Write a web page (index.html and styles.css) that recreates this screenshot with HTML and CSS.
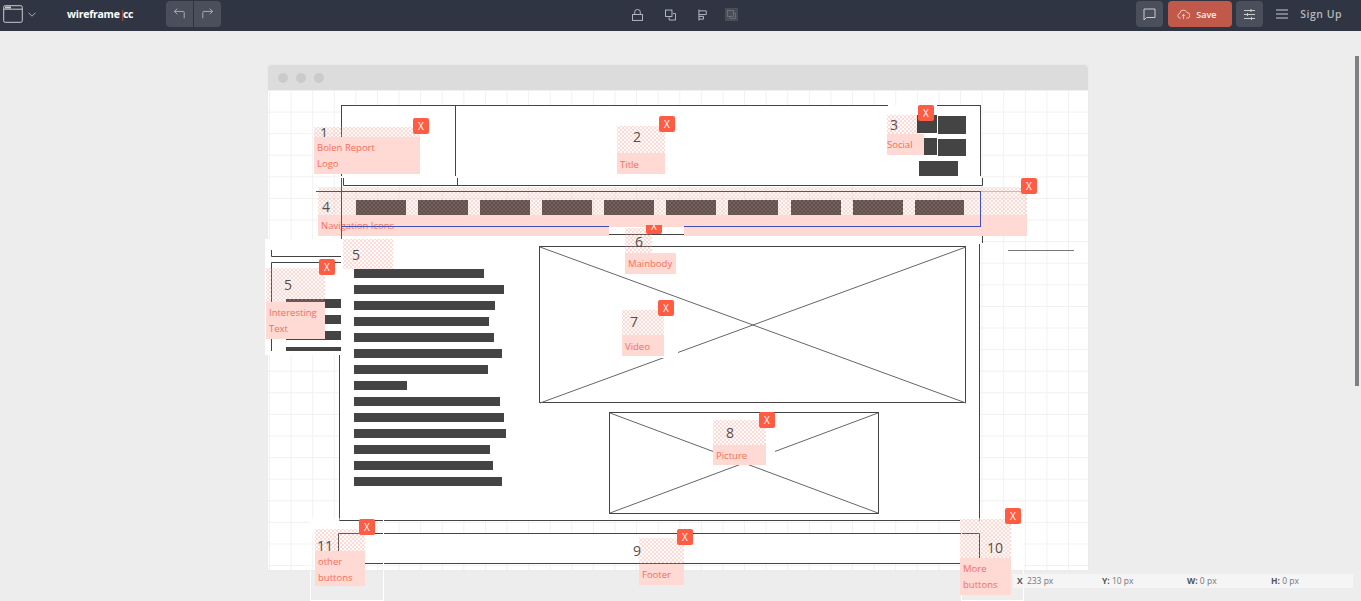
FILE: index.html
```html
<!DOCTYPE html>
<html lang="en">
<head>
<meta charset="utf-8">
<title>wireframe.cc</title>
<link rel="stylesheet" href="styles.css">
</head>
<body>
<header class="topbar">
  <div class="side left">
    <svg class="ic browser-ic" viewBox="0 0 20 18"><rect x="0.7" y="0.7" width="18.6" height="16.6" rx="1.5"/><path d="M1 4.2H19"/><path class="solid" d="M2 1.5h6v2H2z"/></svg>
    <svg class="ic chev" viewBox="0 0 8 5"><path d="M.5.7 4 4.200 7.500.7"/></svg>
    <div class="logo">wireframe<span class="pipe">|</span>cc</div>
    <div class="group">
      <button class="tbtn"><svg class="ic i14" viewBox="0 0 14 14"><path d="M1 4h10.500a1 1 0 0 1 1 1v7M4.500.8 1 4l3.500 3.200"/></svg></button>
      <button class="tbtn"><svg class="ic i14" viewBox="0 0 14 14"><path d="M13 4H2.500a1 1 0 0 0-1 1v7M9.500.8 13 4 9.500 7.200"/></svg></button>
    </div>
  </div>
  <div class="center">
    <svg class="ic i12" viewBox="0 0 12 13"><rect x=".6" y="6" width="10.800" height="6.400"/><path d="M3 6V3a3 2.500 0 0 1 6 0v3"/></svg>
    <svg class="ic i12" viewBox="0 0 12 12"><rect x=".6" y=".6" width="7" height="7"/><path d="M8.500 4.500h3v7h-7v-3"/></svg>
    <svg class="ic i12" viewBox="0 0 12 12"><path d="M1 0v12M1 1.500h8v4H1M1 7.500h5v3H1"/></svg>
    <span class="disabled"><svg class="ic i9" viewBox="0 0 10 10"><rect x=".6" y=".6" width="6.500" height="6.500"/><path d="M7 3.500h2.400v6h-6V7"/></svg></span>
  </div>
  <div class="side right">
    <button class="sq"><svg class="ic i13" viewBox="0 0 13 13"><path d="M1 1h11v8.500H3.500L1 12z"/></svg></button>
    <button class="save"><svg class="ic cloud" viewBox="0 0 14 12"><path d="M4 10H3.200A2.700 2.700 0 0 1 3 4.700 4 4 0 0 1 10.800 4 3 3 0 0 1 11 10h-1M7 11V6M5 7.800 7 5.800l2 2"/></svg>Save</button>
    <button class="sq"><svg class="ic i13" viewBox="0 0 13 13"><path d="M1 2.500h11M1 6.500h11M1 10.500h11M8 1v3M4.500 5v3M8.500 9v3"/></svg></button>
    <svg class="ic burger" viewBox="0 0 12 10"><path d="M0 1h12M0 5h12M0 9h12"/></svg>
    <span class="signup">Sign Up</span>
  </div>
</header>

<main class="browser">
  <div class="titlebar"><i></i><i></i><i></i></div>
  <div class="canvas">
    <svg class="layer" viewBox="268 90 820 480" width="820" height="480">
      <g class="paper">
        <rect x="342" y="105" width="638" height="80"/>
        <rect x="265" y="239" width="77" height="116"/>
        <rect x="340" y="236" width="640" height="284"/>
        <rect x="339" y="533" width="640" height="31"/>
        <rect x="310" y="519" width="49" height="14"/>
        <rect x="960" y="519" width="64" height="51"/>
        <rect x="609" y="226" width="75" height="49"/>
      </g>
      <g class="frame">
        <path d="M341 105.500H888M937 105.500H981M341.500 105V176M980.500 105V176M455.500 105V176M343.500 178V185.500H982.500V178M457.500 178V185"/>
        <path d="M271.500 250V256.500H341M271.500 351V262.500H341M982.500 236V243M979.500 244V520.500M339.500 355V520.500H960"/>
        <path d="M338.500 551V533.500H979.500V563.500H365"/>
      </g>
      <g class="thin">
        <rect x="539.500" y="246.500" width="426" height="156"/>
        <path d="M540 247 966 403M540 403 966 247"/>
        <rect x="609.500" y="412.500" width="269" height="101"/>
        <path d="M610 413 878 513M610 513 878 413"/>
        <path class="far" d="M1008 250.500H1074"/>
      </g>
      <g class="paper">
        <rect x="662" y="349" width="16" height="9"/>
        <rect x="766" y="445" width="9" height="10"/>
      </g>
      <g class="ink">
        <rect x="917" y="115" width="20" height="18"/><rect x="938" y="116" width="28" height="18"/>
        <rect x="924" y="138" width="13" height="17"/><rect x="938" y="139" width="28" height="17"/>
        <rect x="919" y="161" width="39" height="15"/>
        <rect x="356" y="200" width="50" height="15"/><rect x="418" y="200" width="50" height="15"/>
        <rect x="480" y="200" width="50" height="15"/><rect x="542" y="200" width="50" height="15"/>
        <rect x="604" y="200" width="50" height="15"/><rect x="666" y="200" width="50" height="15"/>
        <rect x="728" y="200" width="50" height="15"/><rect x="791" y="200" width="50" height="15"/>
        <rect x="853" y="200" width="50" height="15"/><rect x="915" y="200" width="49" height="15"/>
        <rect x="286" y="299" width="55" height="9"/><rect x="286" y="315" width="55" height="9"/>
        <rect x="286" y="331" width="55" height="9"/><rect x="286" y="347" width="55" height="4"/>
        <rect x="354" y="269" width="130" height="9"/><rect x="354" y="285" width="150" height="9"/>
        <rect x="354" y="301" width="141" height="9"/><rect x="354" y="317" width="135" height="9"/>
        <rect x="354" y="333" width="140" height="9"/><rect x="354" y="349" width="148" height="9"/>
        <rect x="354" y="365" width="134" height="9"/><rect x="354" y="381" width="53" height="9"/>
        <rect x="354" y="397" width="146" height="9"/><rect x="354" y="413" width="150" height="9"/>
        <rect x="354" y="429" width="152" height="9"/><rect x="354" y="445" width="136" height="9"/>
        <rect x="354" y="461" width="139" height="9"/><rect x="354" y="477" width="148" height="9"/>
      </g>
      <g class="ghost">
        <rect x="310.500" y="519" width="73" height="81.500"/>
        <rect x="961.500" y="519" width="62" height="81.500"/>
      </g>
    </svg>

    <div class="badge b4"><div class="dots"><span class="num">4</span></div><div class="lbl">Navigation Icons</div><span class="x">X</span></div>

    <svg class="layer" viewBox="268 90 820 480" width="820" height="480">
      <path class="blue" d="M316 191.500H981M341.500 178V239M980.500 191V227M341 226.500H609M684 226.500H981"/>
      <path class="blue pale" d="M981 191.500H1021"/>
      <rect class="paper" x="609" y="227" width="75" height="20"/>
      <path class="frame" d="M609 234.500H684M609 246.500H684"/>
    </svg>

    <div class="badge b1"><div class="dots"><span class="num">1</span></div><div class="lbl">Bolen Report<br>Logo</div><span class="x">X</span></div>
    <div class="badge b2"><div class="dots"><span class="num">2</span></div><div class="lbl">Title</div><span class="x">X</span></div>
    <div class="badge b3"><div class="dots"><span class="num">3</span></div><div class="lbl">Social</div><span class="x">X</span></div>
    <div class="badge b5"><div class="dots"><span class="num">5</span></div></div>
    <div class="badge b5l"><div class="dots"><span class="num">5</span></div><div class="lbl">Interesting<br>Text</div><span class="x">X</span></div>
    <div class="badge b6"><div class="dots"><span class="num">6</span></div><div class="lbl">Mainbody</div><span class="x">X</span></div>
    <div class="badge b7"><div class="dots"><span class="num">7</span></div><div class="lbl">Video</div><span class="x">X</span></div>
    <div class="badge b8"><div class="dots"><span class="num">8</span></div><div class="lbl">Picture</div><span class="x">X</span></div>
    <div class="badge b9"><div class="dots"><span class="num">9</span></div><div class="lbl">Footer</div><span class="x">X</span></div>
    <div class="badge b10"><div class="dots"><span class="num">10</span></div><div class="lbl">More<br>buttons</div><span class="x">X</span></div>
    <div class="badge b11"><div class="dots"><span class="num">11</span></div><div class="lbl">other<br>buttons</div><span class="x">X</span></div>
  </div>
</main>

<div class="coords">
  <span class="c1"><b>X</b> 233 px</span>
  <span class="c2"><b>Y:</b> 10 px</span>
  <span class="c3"><b>W:</b> 0 px</span>
  <span class="c4"><b>H:</b> 0 px</span>
</div>
<div class="scroll"></div>
</body>
</html>
```
FILE: styles.css
```css
* { box-sizing: border-box; }
html, body { margin: 0; height: 100%; }
body { background: #ededed; overflow: hidden; font-family: "Open Sans", sans-serif; position: relative; }
button { border: 0; padding: 0; font: inherit; color: inherit; }

.topbar { height: 31px; background: #2f3542; display: flex; align-items: flex-start; justify-content: space-between; position: relative; }
.side { display: flex; align-items: center; height: 28px; }
.side.left { padding-left: 3px; }
.side.right { padding-right: 19px; }
.ic { display: block; fill: none; stroke: #c9cbd0; stroke-width: 1; }
.solid { fill: #c9cbd0; stroke: none; }
.browser-ic { width: 20px; height: 18px; }
.chev { width: 8px; height: 5px; margin-left: 5px; stroke: #a9acb3; }
.logo { margin-left: 31px; width: 99px; color: #fff; font-size: 10.5px; font-weight: 700; letter-spacing: -.25px; }
.pipe { color: #e0533f; font-weight: 400; margin-right: -1px; letter-spacing: -1.5px; }
.group { display: flex; height: 26px; border-radius: 4px; overflow: hidden; gap: 1px; background: #2f3542; }
.tbtn { width: 27px; background: #4a4f5b; display: flex; align-items: center; justify-content: center; }
.i14 { width: 13px; height: 12px; stroke: #b6b9bf; }
.center { position: absolute; left: 632px; top: 8px; display: flex; align-items: center; height: 13px; gap: 22px; }
.i12 { width: 11px; height: 12px; stroke: #bfc2c7; }
.disabled { width: 13px; height: 13px; margin-left: -6px; background: #494d57; display: flex; align-items: center; justify-content: center; }
.i9 { width: 9px; height: 9px; stroke: #6f727a; }
.sq { width: 27px; height: 26px; background: #4a4f5b; border-radius: 4px; display: flex; align-items: center; justify-content: center; }
.i13 { width: 13px; height: 13px; stroke: #c9cbd0; }
.save { width: 64px; height: 26px; margin: 0 4px 0 5px; background: #c0594a; border-radius: 4px; color: #fdeeea; font-size: 9px; font-weight: 600; display: flex; align-items: center; justify-content: flex-start; padding-left: 9px; gap: 6px; }
.cloud { width: 13px; height: 11px; stroke: #f4cfc9; }
.burger { width: 12px; height: 10px; margin-left: 13px; }
.signup { margin-left: 12px; color: #b5b8bd; font-size: 10.5px; font-weight: 600; letter-spacing: .5px; }

.browser { position: absolute; left: 268px; top: 65px; width: 820px; height: 505px; box-shadow: 0 0 1px #ddd; }
.titlebar { height: 25px; background: #dcdcdc; border-radius: 4px 4px 0 0; display: flex; align-items: center; gap: 8px; padding-left: 10px; }
.titlebar i { width: 10px; height: 10px; border-radius: 50%; background: #cbcbcb; }
.canvas { position: relative; height: 480px; background-color: #fff;
  background-image: linear-gradient(#f1f1f1 1px, transparent 1px), linear-gradient(90deg, #f1f1f1 1px, transparent 1px);
  background-size: 21.6px 21.6px; background-position: 1px 0; }
.layer { position: absolute; left: 0; top: 0; overflow: visible; }
.paper, .paper rect { fill: #fff; stroke: none; }
.frame { fill: none; stroke: #444; stroke-width: 1; }
.thin { fill: none; stroke: #666; stroke-width: 1; }
.thin rect { stroke: #444; }
.far { stroke: #777; }
.ink rect { fill: #444; }
.ghost rect { fill: none; stroke: #fff; stroke-width: 1; }
.blue { fill: none; stroke: #3f51b5; stroke-width: 1; }
.pale { stroke: #b5bde6; }

.badge { position: absolute; display: flex; flex-direction: column; }
.dots { flex: none; background-color: rgba(255, 217, 211, .1);
  background-image: radial-gradient(circle, rgba(245, 120, 100, .3) .65px, transparent 1px), radial-gradient(circle, rgba(245, 120, 100, .3) .65px, transparent 1px);
  background-size: 4px 4px; background-position: 0 0, 2px 2px; }
.num { display: block; color: #4f4f4f; font-size: 14px; line-height: 14px; white-space: nowrap; }
.lbl { flex: none; background: #ffd9d3; color: #f5705c; font-size: 9.5px; line-height: 16px; padding: 3px 0 0 3px; white-space: nowrap; }
.x { position: absolute; width: 16px; height: 16px; background: #ff5c43; border-radius: 2px; color: #fff; font-size: 10px; line-height: 16px; text-align: center; }

.b1 { left: 46px; top: 37px; width: 106px; }
.b1 .dots { height: 10px; } .b1 .num { margin: -1px 0 0 6px; } .b1 .lbl { height: 37px; } .b1 .x { left: 99px; top: -9px; }
.b2 { left: 349px; top: 36px; width: 48px; }
.b2 .dots { height: 27px; padding-top: 4px; } .b2 .num { margin-left: 16px; } .b2 .lbl { height: 21px; padding-top: 4px; } .b2 .x { left: 42px; top: -10px; }
.b3 { left: 619px; top: 25px; width: 37px; }
.b3 .dots { height: 19px; width: 30px; padding-top: 3px; } .b3 .num { margin-left: 3px; } .b3 .lbl { height: 21px; padding-left: 0; } .b3 .x { left: 31px; top: -10px; }
.b4 { left: 50px; top: 97px; width: 709px; }
.b4 .dots { height: 28px; padding-top: 13px; } .b4 .num { margin-left: 4px; } .b4 .lbl { height: 21px; } .b4 .x { left: 703px; top: -9px; }
.b5 { left: 75px; top: 149px; width: 50px; }
.b5 .dots { height: 30px; padding-top: 9px; } .b5 .num { margin-left: 9px; }
.b5l { left: -2px; top: 178px; width: 59px; }
.b5l .dots { height: 34px; padding-top: 10px; } .b5l .num { margin-left: 18px; } .b5l .lbl { height: 37px; } .b5l .x { left: 53px; top: -9px; }
.b6 { left: 357px; top: 138px; width: 51px; }
.b6 .dots { height: 25px; width: 27px; padding-top: 7px; } .b6 .num { margin-left: 10px; } .b6 .lbl { height: 21px; } .b6 .x { left: 21px; top: -3px; height: 9px; line-height: 3px; border-radius: 0 0 2px 2px; overflow: hidden; }
.b7 { left: 354px; top: 220px; width: 42px; }
.b7 .dots { height: 25px; padding-top: 5px; } .b7 .num { margin-left: 8px; } .b7 .lbl { height: 21px; padding-top: 4px; } .b7 .x { left: 36px; top: -10px; }
.b8 { left: 445px; top: 330px; width: 53px; }
.b8 .dots { height: 25px; padding-top: 6px; } .b8 .num { margin-left: 13px; } .b8 .lbl { height: 20px; } .b8 .x { left: 46px; top: -8px; }
.b9 { left: 371px; top: 448px; width: 45px; }
.b9 .dots { height: 26px; padding-top: 6px; } .b9 .num { margin-left: -6px; } .b9 .lbl { height: 21px; } .b9 .x { left: 38px; top: -9px; }
.b10 { left: 692px; top: 429px; width: 51px; }
.b10 .dots { height: 39px; padding-top: 22px; } .b10 .num { margin-left: 27px; } .b10 .lbl { height: 37px; } .b10 .x { left: 45px; top: -11px; }
.b11 { left: 47px; top: 439px; width: 50px; }
.b11 .dots { height: 22px; padding-top: 10px; } .b11 .num { margin-left: 2px; } .b11 .lbl { height: 35px; } .b11 .x { left: 44px; top: -10px; }

.coords { position: absolute; left: 1013px; top: 574px; width: 340px; height: 14px; background: #f5f5f5; color: #757575; font-size: 8.5px; line-height: 14px; display: flex; }
.coords b { color: #555; font-weight: 700; }
.coords span { white-space: nowrap; }
.c1 { margin-left: 4px; width: 85px; }
.c1 b { margin-right: 2px; }
.c2 { width: 85px; }
.c3 { width: 84px; }
.scroll { position: absolute; left: 1355px; top: 56px; width: 4px; height: 330px; background: #808085; }
```
